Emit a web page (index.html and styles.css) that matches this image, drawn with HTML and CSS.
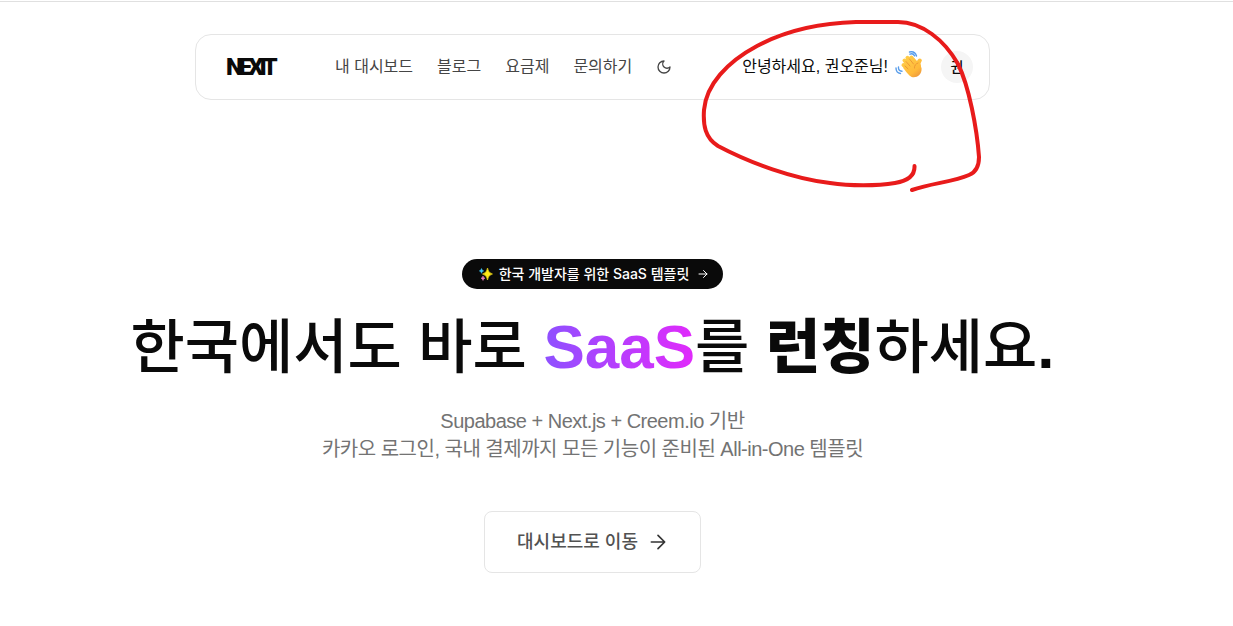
FILE: index.html
```html
<!DOCTYPE html>
<html lang="ko">
<head>
<meta charset="utf-8">
<meta name="viewport" content="width=device-width, initial-scale=1">
<title>NEXIT</title>
<link rel="stylesheet" href="styles.css">
</head>
<body>
<div class="page">
  <header class="navbar">
    <a class="logo" href="#">NEXIT</a>
    <nav class="links">
      <a href="#">내 대시보드</a>
      <a href="#">블로그</a>
      <a href="#">요금제</a>
      <a href="#">문의하기</a>
      <button class="theme" type="button" aria-label="다크 모드">
        <svg width="16" height="16" viewBox="0 0 24 24" fill="none" stroke="currentColor" stroke-width="2" stroke-linecap="round" stroke-linejoin="round"><path d="M12 3a6 6 0 0 0 9 9 9 9 0 1 1-9-9Z"/></svg>
      </button>
    </nav>
    <div class="user">
      <span class="greeting">안녕하세요, 권오준님!</span>
      <svg class="wave" width="28" height="28" viewBox="0 0 28 28" aria-hidden="true">
        <defs><linearGradient id="skin" gradientUnits="userSpaceOnUse" x1="8" y1="5" x2="26" y2="28"><stop offset="0" stop-color="#ffd04a"/><stop offset=".65" stop-color="#ffb93a"/><stop offset="1" stop-color="#e5873f"/></linearGradient></defs>
        <g fill="none" stroke="#579cea" stroke-width="1.4" stroke-linecap="round"><path d="M15 3.200q3-1.400 4.600 1.600M14.500 1q5.500-1.200 7 4M3.500 16q-.4 3.800 3.500 4.200M1 17q0 5 4.500 5.500"/></g>
        <g fill="none" stroke="url(#skin)" stroke-width="4" stroke-linecap="round"><path d="M9.500 9.500l8 9M12.500 6.800l8 9M16.300 6.500l6 8M8.500 14l8 7M24.800 9.500q-2 2-.8 6"/></g>
        <path d="M10 13l9-6 5 5q2.300 2 2.600 5.500c.2 6-4.300 9.200-8.800 8.700-3-.3-5.800-4.200-9.600-9.200z" fill="url(#skin)"/>
        <path d="M11 10.500l4 4.500M14.500 8l4 5M10 15l3 2.800M23 12q-4 1.500-3.500 5" fill="none" stroke="#e88d32" stroke-width=".8" stroke-linecap="round"/>
      </svg>
      <button class="avatar" type="button">권</button>
    </div>
  </header>

  <main class="hero">
    <a class="badge" href="#">
      <svg width="14" height="14" viewBox="0 0 14 14" aria-hidden="true"><path d="M8.500 1q.5 5 5 6-4.500 1-5 6-.5-5-5-6 4.500-1 5-6z" fill="#ffe817" stroke="#ffe817" stroke-width=".6"/><path d="M2.500 1.500q.3 2 2.200 2.400-1.900.4-2.200 2.400Q2.200 4.300.3 3.900q1.900-.4 2.200-2.400z" fill="#43c9f5" stroke="#43c9f5" stroke-width=".5"/><path d="M4 9q.3 1.900 2 2.200-1.700.3-2 2.300-.3-2-2-2.300Q3.700 10.900 4 9z" fill="#f184c4" stroke="#f184c4" stroke-width=".5"/></svg>
      <span>한국 개발자를 위한 SaaS 템플릿</span>
      <svg class="badge-arrow" width="12" height="12" viewBox="0 0 24 24" fill="none" stroke="currentColor" stroke-width="2" stroke-linecap="round" stroke-linejoin="round" aria-hidden="true"><path d="M4 12h16M13 5l7 7-7 7"/></svg>
    </a>
    <h1 class="title">한국에서도 바로 <span class="gradient">SaaS</span>를 <strong>런칭</strong>하세요<span class="stop">.</span></h1>
    <p class="lead">Supabase + Next.js + Creem.io 기반<br>카카오 로그인, 국내 결제까지 모든 기능이 준비된 All-in-One 템플릿</p>
    <button class="cta" type="button">
      <span>대시보드로 이동</span>
      <svg width="20" height="20" viewBox="0 0 24 24" fill="none" stroke="currentColor" stroke-width="2" stroke-linecap="round" stroke-linejoin="round" aria-hidden="true"><path d="M4 12h16M12 4l8 8-8 8"/></svg>
    </button>
  </main>
</div>
<svg class="marker" width="290" height="180" viewBox="0 0 290 180" fill="none" aria-hidden="true"><path d="M214.500 147C215 157 207 162 195 164C177 167 150 167 130 164C94 160 50 144 18 127C5 119 3 106 4 91C6 66 27 43 57 27C85 12 121 4 156 3H196C222 2 245 22 258 45C269 67 277 110 279 138Q279 152 269 156C253 163 232 164 212 171" stroke="#e81b1b" stroke-width="4" stroke-linecap="round" stroke-linejoin="round"/></svg>
</body>
</html>
```

FILE: styles.css
```css
* { box-sizing: border-box; }

body {
  margin: 0;
  position: relative;
  background: #fff;
  color: #0a0a0a;
  border-top: 1px solid #fff;
  font-family: "Liberation Sans", "Noto Sans CJK KR", sans-serif;
  font-size: 16px;
  line-height: 24px;
}

a { color: inherit; text-decoration: none; }

button {
  border: 0;
  padding: 0;
  background: none;
  color: inherit;
  font: inherit;
  cursor: pointer;
}

.page {
  padding: 32px 48px 53px 0;
  border-top: 1px solid #e0e0e0;
}

.navbar {
  display: flex;
  align-items: center;
  max-width: 795px;
  margin: 0 auto;
  padding: 16px 16px 16px 30px;
  border: 1px solid #e5e5e5;
  border-radius: 16px;
}

.logo {
  width: 109px;
  font-family: Roboto, sans-serif;
  font-size: 24px;
  line-height: 32px;
  font-weight: 900;
  letter-spacing: -4px;
}

.links {
  display: flex;
  align-items: center;
  gap: 24px;
  color: #454545;
}

.theme { display: flex; }

.user {
  display: flex;
  align-items: center;
  margin-left: auto;
}

.wave { margin: 0 18px 4px 7px; }

.avatar {
  width: 32px;
  height: 32px;
  border-radius: 50%;
  background: #f5f5f5;
  font-size: 14px;
  font-weight: 500;
}

.hero {
  display: flex;
  flex-direction: column;
  align-items: center;
  padding-top: 159px;
  text-align: center;
}

.badge {
  display: flex;
  align-items: center;
  gap: 6px;
  padding: 5px 14px 5px 17px;
  border-radius: 15px;
  background: #0a0a0a;
  color: #fff;
  font-family: Inter, "Noto Sans CJK KR", sans-serif;
  font-size: 14px;
  line-height: 20px;
  font-weight: 500;
}

.badge-arrow { margin-left: 2px; }

.title {
  margin: 24px 0 0;
  font-size: 59px;
  line-height: 60px;
  font-weight: 500;
  font-family: "Noto Sans CJK KR", sans-serif;
  white-space: nowrap;
}

.title strong { font-weight: 900; }

.gradient,
.stop {
  font-family: "Liberation Sans", sans-serif;
  font-size: 62px;
  font-weight: 700;
}

.gradient {
  background: linear-gradient(90deg, #8e51ff, #e12afb);
  background-clip: text;
  -webkit-background-clip: text;
  color: transparent;
}

.lead {
  margin: 30px 0 0;
  color: #737373;
  font-size: 20px;
  line-height: 28px;
  letter-spacing: -0.025em;
}

.cta {
  display: flex;
  align-items: center;
  gap: 10px;
  margin-top: 48px;
  padding: 16px 32px;
  border: 1px solid #e5e5e5;
  border-radius: 8px;
  color: #525252;
  font-size: 18px;
  line-height: 28px;
  font-weight: 500;
}

.cta svg { color: #333; }

.marker {
  position: absolute;
  top: 18px;
  left: 700px;
  pointer-events: none;
}
```
